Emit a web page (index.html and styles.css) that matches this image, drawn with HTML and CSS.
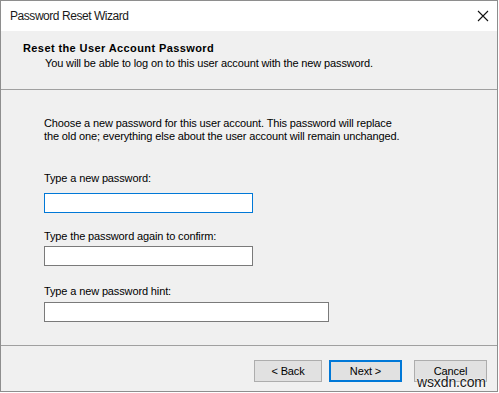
FILE: index.html
```html
<!DOCTYPE html>
<html lang="en">
  <head>
    <meta charset="UTF-8" />
    <meta name="viewport" content="width=device-width, initial-scale=1.0" />
    <title>Password Reset Wizard</title>
    <link rel="stylesheet" href="styles.css">
  </head>
  <body>
    <div class="window">
      <!-- Title bar -->
      <div class="titlebar">
        <span class="title">Password Reset Wizard</span>
        <svg class="close" width="12" height="12" viewBox="0 0 12 12">
          <path d="M1 1 L11 11 M11 1 L1 11" stroke="#111" stroke-width="1.1" fill="none" />
        </svg>
      </div>

      <!-- Header -->
      <div class="header">
        <div class="header-title">Reset the User Account Password</div>
        <div class="header-sub">You will be able to log on to this user account with the new password.</div>
      </div>

      <!-- Page content -->
      <div class="content">
        <p class="intro">
          Choose a new password for this user account. This password will replace<br />
          the old one; everything else about the user account will remain unchanged.
        </p>

        <div class="field field-first">
          <label for="new-password">Type a new password:</label>
          <input type="password" id="new-password" class="focused" />
        </div>
        <div class="field field-second">
          <label for="confirm-password">Type the password again to confirm:</label>
          <input type="password" id="confirm-password" />
        </div>
        <div class="field field-third">
          <label for="hint">Type a new password hint:</label>
          <input type="text" id="hint" class="wide" />
        </div>
      </div>

      <!-- Buttons -->
      <div class="footer">
        <button class="back">&lt; Back</button>
        <button class="default">Next &gt;</button>
        <button class="cancel">Cancel</button>
      </div>
    </div>
    <div class="watermark">wsxdn.com</div>
  </body>
</html>
```

FILE: styles.css
```css
body {
  margin: 0;
  padding: 0;
  background-color: #fff;
  font-family: "Liberation Sans", Arial, sans-serif;
  font-size: 11px;
  letter-spacing: -0.13px;
  color: #000;
}
.window {
  position: relative;
  width: 498px;
  height: 392px;
  box-sizing: border-box;
  border: 1px solid #8e8e8e;
  background-color: #f0f0f0;
  display: flex;
  flex-direction: column;
}
.titlebar {
  height: 30px;
  background-color: #fff;
  display: flex;
  align-items: center;
  justify-content: space-between;
  padding: 0 8px 0 9px;
  flex-shrink: 0;
}
.title {
  font-size: 12px;
  letter-spacing: -0.45px;
  color: #1a1a1a;
}
.header {
  height: 59px;
  box-sizing: border-box;
  padding: 10px 0 0 22px;
  border-bottom: 1px solid #a0a0a0;
  flex-shrink: 0;
}
.header-title {
  font-weight: bold;
  line-height: 14px;
  letter-spacing: 0.4px;
}
.header-sub {
  line-height: 14px;
  padding-left: 22px;
  margin-top: 1px;
}
.content {
  flex: 1;
  padding: 27px 0 0 43px;
}
.intro {
  margin: 0;
  line-height: 13px;
}
.field label {
  display: block;
  line-height: 13px;
}
.field input {
  display: block;
  width: 209px;
  height: 20px;
  box-sizing: border-box;
  margin: 0;
  padding: 0 3px;
  border: 1px solid #7a7a7a;
  background-color: #fff;
  outline: none;
}
.field input.focused {
  border-color: #0078d7;
}
.field input.wide {
  width: 285px;
}
.field-first {
  margin-top: 29px;
}
.field-first label {
  margin-bottom: 8px;
}
.field-second {
  margin-top: 17px;
}
.field-second label {
  margin-bottom: 3px;
}
.field-third {
  margin-top: 19px;
}
.field-third label {
  margin-bottom: 4px;
}
.footer {
  height: 46px;
  box-sizing: border-box;
  border-top: 1px solid #a0a0a0;
  display: flex;
  justify-content: flex-end;
  padding: 14px 10px 0 0;
  flex-shrink: 0;
}
.footer button {
  width: 73px;
  height: 22px;
  box-sizing: border-box;
  background-color: #e1e1e1;
  border: 1px solid #adadad;
  font-family: "Liberation Sans", Arial, sans-serif;
  font-size: 11px;
  letter-spacing: -0.13px;
  color: #000;
  padding: 0;
}
.footer button.back {
  width: 68px;
  margin-right: 7px;
}
.footer button.default {
  border: 2px solid #0078d7;
}
.footer button.cancel {
  margin-left: 12px;
}
.watermark {
  position: absolute;
  left: 417px;
  top: 374px;
  font-family: "Liberation Sans", Arial, sans-serif;
  font-size: 14px;
  color: #1a1a1a;
  text-shadow: 0 0 2px #fff, 0 0 2px #fff;
}
```
